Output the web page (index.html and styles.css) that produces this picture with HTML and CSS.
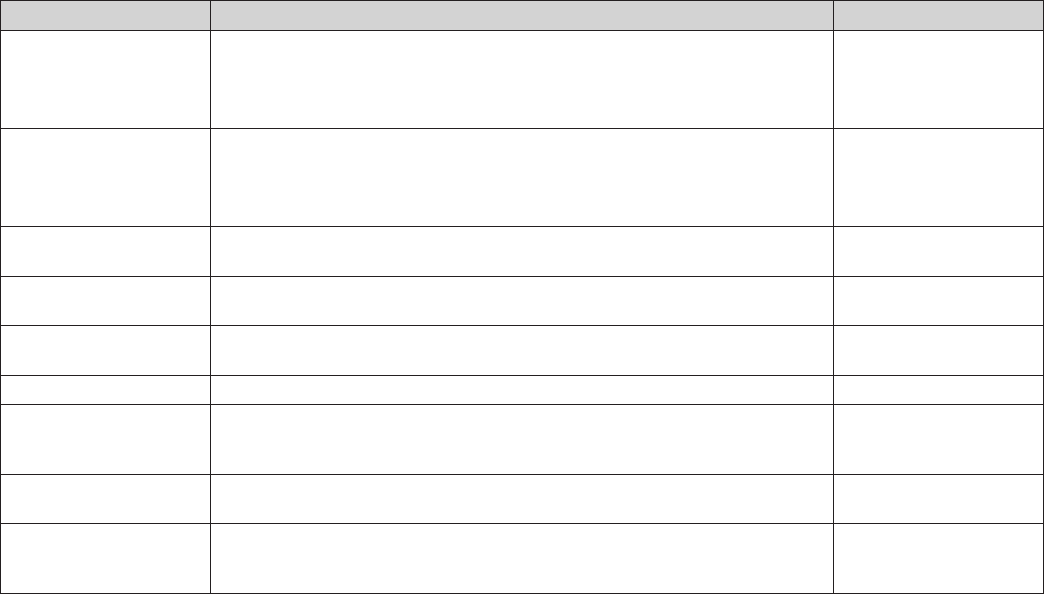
FILE: index.html
```html
<!DOCTYPE html>
<html lang="en">
<head>
  <meta charset="UTF-8">
  <meta name="viewport" content="width=device-width, initial-scale=1.0">
  <title>Table</title>
  <link rel="stylesheet" href="styles.css">
</head>
<body>
<table class="grid">
  <colgroup>
    <col class="col-side">
    <col class="col-main">
    <col class="col-side">
  </colgroup>
  <thead>
    <tr class="h30"><th></th><th></th><th></th></tr>
  </thead>
  <tbody>
    <tr class="h98"><td></td><td></td><td></td></tr>
    <tr class="h98"><td></td><td></td><td></td></tr>
    <tr class="h50"><td></td><td></td><td></td></tr>
    <tr class="h49"><td></td><td></td><td></td></tr>
    <tr class="h50"><td></td><td></td><td></td></tr>
    <tr class="h29"><td></td><td></td><td></td></tr>
    <tr class="h70"><td></td><td></td><td></td></tr>
    <tr class="h49"><td></td><td></td><td></td></tr>
    <tr class="h70"><td></td><td></td><td></td></tr>
  </tbody>
</table>
</body>
</html>
```

FILE: styles.css
```css
body {
  margin: 0;
  background: #ffffff;
  font-family: "Liberation Sans", Arial, sans-serif;
}

.grid {
  border-collapse: collapse;
  table-layout: fixed;
  width: 1044px;
}

.col-side {
  width: 210px;
}

.grid th,
.grid td {
  border: 1px solid #231f20;
  padding: 0;
}

.grid th {
  background: #d3d3d3;
}

.h30 { height: 30px; }
.h29 { height: 29px; }
.h49 { height: 49px; }
.h50 { height: 50px; }
.h70 { height: 70px; }
.h98 { height: 98px; }
```
